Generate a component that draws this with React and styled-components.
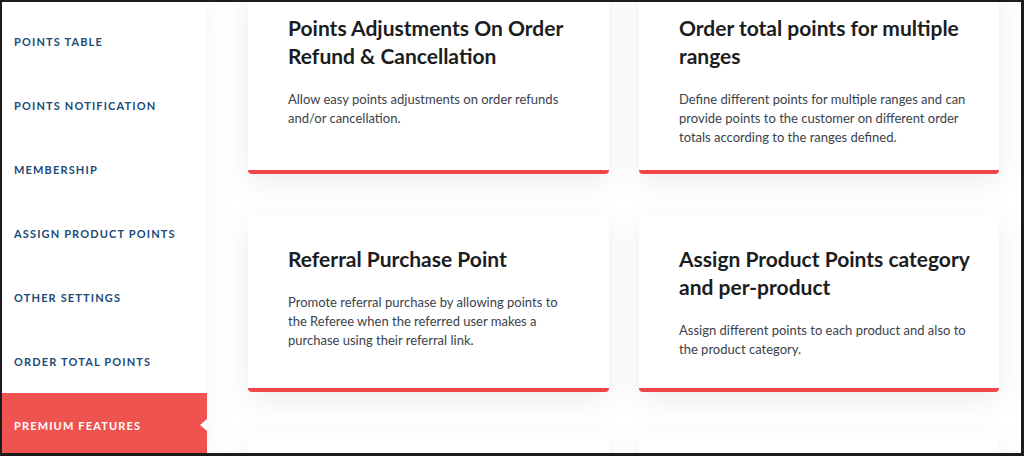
import React from "react";
import styled, { createGlobalStyle } from "styled-components";

const GlobalStyle = createGlobalStyle`
  html, body {
    margin: 0;
    padding: 0;
    background: #fff;
  }
  body {
    font-family: Lato, "Open Sans", Arial, sans-serif;
    -webkit-font-smoothing: antialiased;
  }
`;

const navItems = [
  "Points Table",
  "Points Notification",
  "Membership",
  "Assign Product Points",
  "Other Settings",
  "Order Total Points",
  "Premium Features",
];

const features = [
  {
    title: "Points Adjustments On Order Refund & Cancellation",
    text: "Allow easy points adjustments on order refunds and/or cancellation.",
  },
  {
    title: "Order total points for multiple ranges",
    text: "Define different points for multiple ranges and can provide points to the customer on different order totals according to the ranges defined.",
  },
  {
    title: "Referral Purchase Point",
    text: "Promote referral purchase by allowing points to the Referee when the referred user makes a purchase using their referral link.",
  },
  {
    title: "Assign Product Points category and per-product",
    text: "Assign different points to each product and also to the product category.",
  },
  { title: "", text: "" },
  { title: "", text: "" },
];

function App() {
  return (
    <>
      <GlobalStyle />
      <Frame>
        <Sidebar>
          {navItems.map((label) => (
            <NavItem key={label} active={label === "Premium Features"}>
              {label}
            </NavItem>
          ))}
        </Sidebar>
        <Main>
          <Grid>
            {features.map((f, i) => (
              <Card key={i}>
                {f.title && <Title>{f.title}</Title>}
                {f.text && <Text>{f.text}</Text>}
              </Card>
            ))}
          </Grid>
        </Main>
      </Frame>
    </>
  );
}

export default App;

const Frame = styled.div`
  box-sizing: border-box;
  width: 1024px;
  height: 456px;
  border: 2px solid #1c1c1c;
  border-right-width: 3px;
  border-bottom-width: 3px;
  display: flex;
  overflow: hidden;
  background: #fff;
`;

const Sidebar = styled.nav`
  flex: 0 0 205px;
  display: flex;
  flex-direction: column;
  padding-top: 7px;
  background: #fff;
  position: relative;
  z-index: 1;
  box-shadow: 2px 0 24px rgba(0, 0, 0, 0.05);
`;

const NavItem = styled.a`
  position: relative;
  display: flex;
  align-items: center;
  height: 64px;
  flex-shrink: 0;
  padding-left: 12px;
  font-size: 11px;
  font-weight: 700;
  letter-spacing: 1.15px;
  text-transform: uppercase;
  color: ${(p) => (p.active ? "#fff" : "#1d4a78")};
  background: ${(p) => (p.active ? "#ef5350" : "transparent")};
  cursor: pointer;

  &:after {
    content: "";
    display: ${(p) => (p.active ? "block" : "none")};
    position: absolute;
    right: 0;
    top: 50%;
    transform: translateY(-50%);
    border-top: 6px solid transparent;
    border-bottom: 6px solid transparent;
    border-right: 7px solid #fff;
  }
`;

const Main = styled.main`
  flex: 1;
  padding: 0 22px 0 41px;
  overflow: hidden;
`;

const Grid = styled.div`
  display: grid;
  grid-template-columns: 361px 360px;
  column-gap: 30px;
  row-gap: 41px;
  margin-top: -18px;
`;

const Card = styled.div`
  background: #fff;
  border-radius: 4px;
  border-bottom: 4px solid #ef4747;
  padding: 30px 26px 23px 40px;
  box-shadow: 0 8px 30px rgba(0, 0, 0, 0.08);
  min-height: 120px;
`;

const Title = styled.h3`
  margin: 0 0 20px;
  font-size: 21px;
  line-height: 28px;
  font-weight: 700;
  color: #1b1d21;
`;

const Text = styled.p`
  margin: 0;
  max-width: 289px;
  font-size: 13px;
  line-height: 19px;
  color: #3b424b;
`;
